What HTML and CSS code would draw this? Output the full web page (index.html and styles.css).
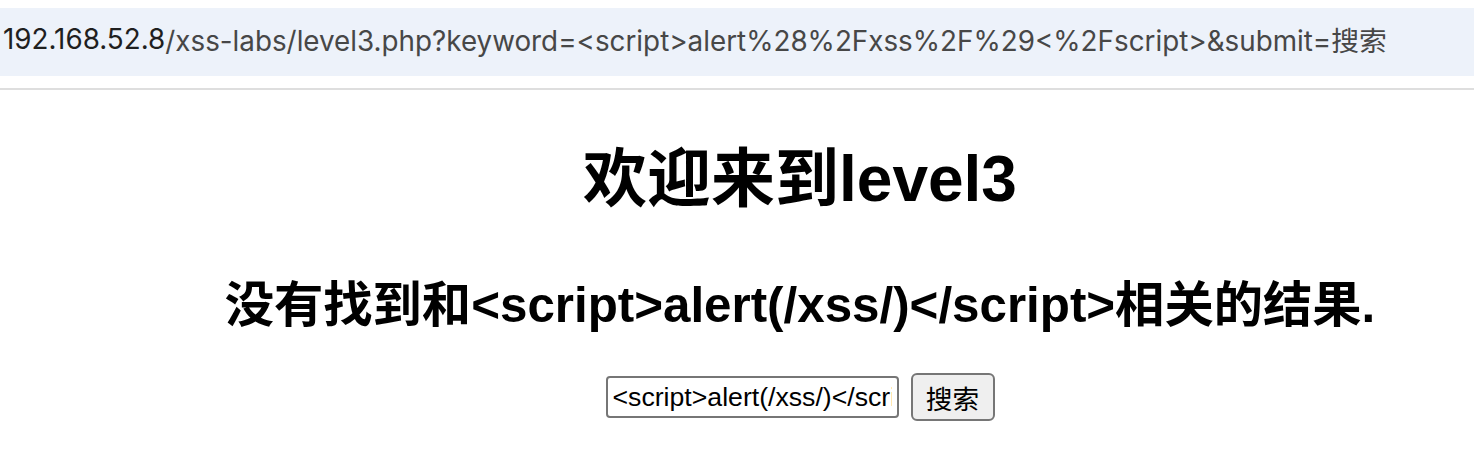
FILE: index.html
```html
<!DOCTYPE html>
<html lang="zh">
<head>
<meta charset="utf-8">
<title>level3</title>
<link rel="stylesheet" href="styles.css">
</head>
<body>
<div class="chrome">
  <div class="omnibox"><span class="host">192.168.52.8</span><span class="path">/xss-labs/level3.php?keyword=&lt;script&gt;alert%28%2Fxss%2F%29&lt;%2Fscript&gt;&amp;submit=搜索</span></div>
</div>
<div class="page">
  <h1 class="title">欢迎来到level3</h1>
  <h2 class="result">没有找到和&lt;script&gt;alert(/xss/)&lt;/script&gt;相关的结果.</h2>
  <form class="search">
    <input class="keyword" name="keyword" value="&lt;script&gt;alert(/xss/)&lt;/script&gt;">
    <button class="submit" type="button">搜索</button>
  </form>
</div>
</body>
</html>
```
FILE: styles.css
```css
html, body {
  margin: 0;
  padding: 0;
  background: #ffffff;
  overflow: hidden;
}

.chrome {
  padding-top: 8px;
  padding-bottom: 12px;
  border-bottom: 2px solid #dedede;
}

.omnibox {
  box-sizing: border-box;
  height: 68px;
  background: #edf2fa;
  display: flex;
  align-items: center;
  padding: 0 0 6px 3px;
  font-family: Inter, "Noto Sans CJK SC", sans-serif;
  font-size: 27.8px;
  white-space: nowrap;
}

.host {
  color: #1f1f1f;
}

.path {
  color: #474747;
}

.page {
  padding-left: 126px;
  font-family: "Liberation Sans", "Noto Sans CJK SC", sans-serif;
  color: #000;
  text-align: center;
}

.title {
  margin: 52px 0 61px;
  font-size: 64px;
  line-height: 74px;
  font-weight: bold;
}

.result {
  margin: 40px 0;
  font-size: 49.3px;
  line-height: 56px;
  font-weight: bold;
  white-space: nowrap;
}

.search {
  display: flex;
  justify-content: center;
  align-items: center;
  gap: 12px;
}

.keyword {
  box-sizing: border-box;
  width: 293px;
  height: 42px;
  padding: 0 5px;
  border: 2px solid #767676;
  border-radius: 4px;
  font-family: "Liberation Sans", "Noto Sans CJK SC", sans-serif;
  font-size: 26.67px;
  color: #000;
  background: #fff;
}

.submit {
  box-sizing: border-box;
  width: 84px;
  height: 48px;
  padding: 0;
  border: 2px solid #767676;
  border-radius: 6px;
  background: #efefef;
  font-family: "Noto Sans CJK SC", sans-serif;
  font-size: 26.67px;
  color: #000;
}
```
